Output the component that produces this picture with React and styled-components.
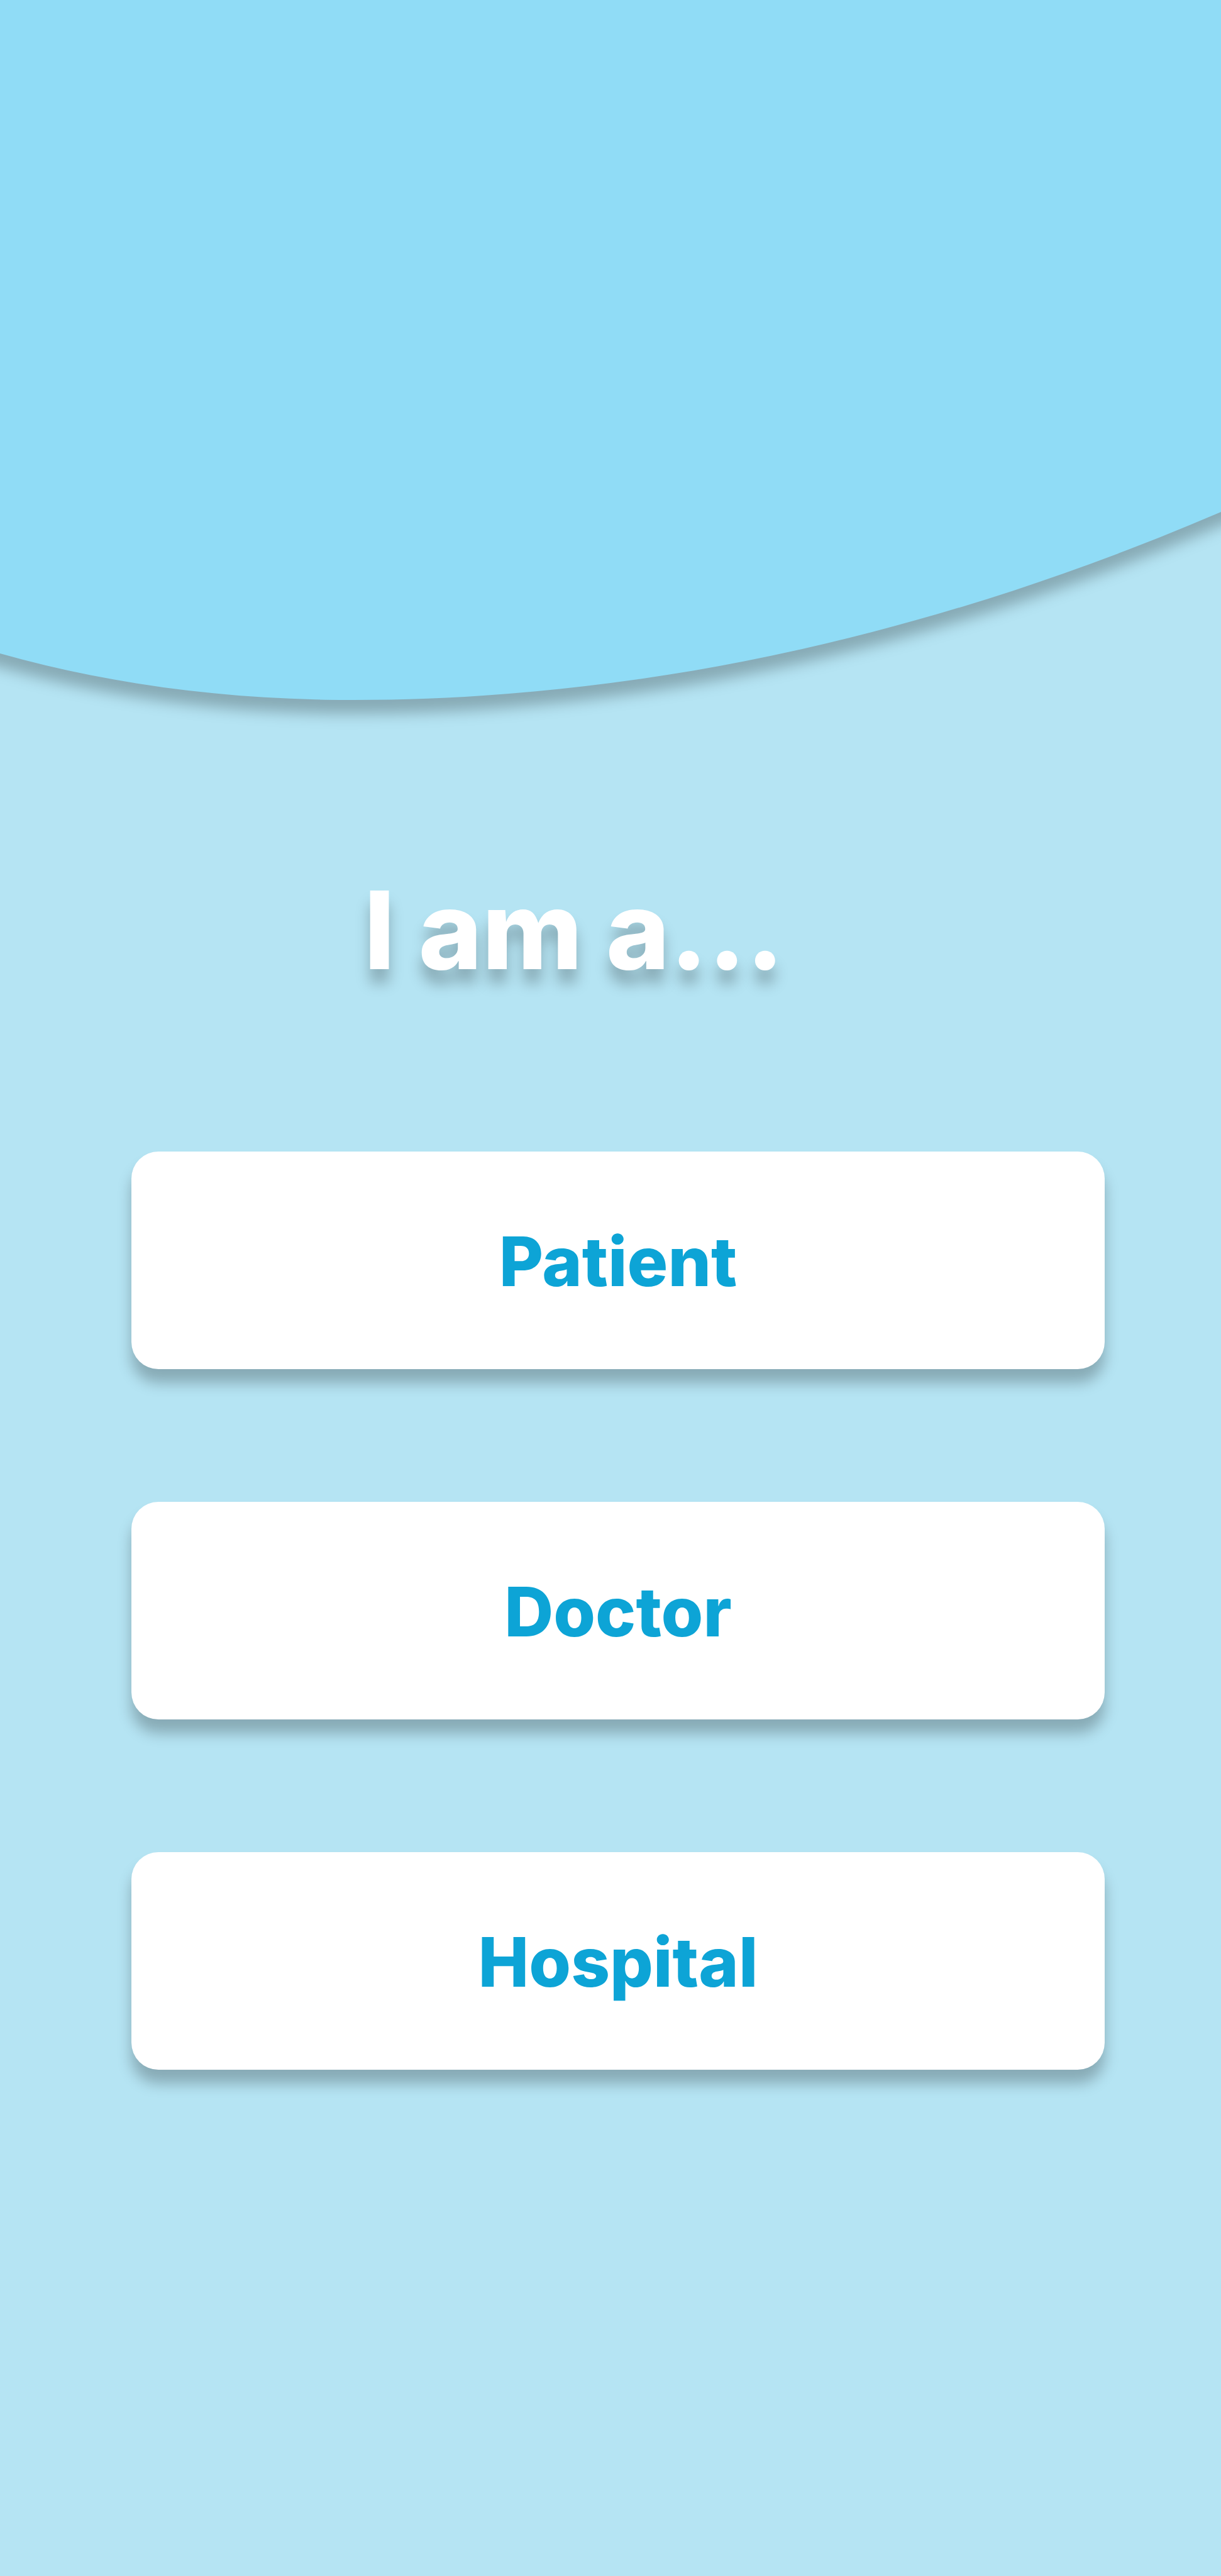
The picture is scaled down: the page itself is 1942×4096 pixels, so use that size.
import React from "react";
import styled, { createGlobalStyle } from "styled-components";

const GlobalStyle = createGlobalStyle`
  *, *::before, *::after { box-sizing: border-box; }
  body {
    margin: 0;
    background: #b5e4f3;
    font-family: Inter, "Liberation Sans", sans-serif;
  }
`;

const Page = styled.main`
  display: flex;
  flex-direction: column;
  min-height: 100vh;
  overflow: hidden;
  background: #b5e4f3;
`;

const Wave = styled.svg`
  display: block;
  width: 100%;
  flex: none;
  overflow: visible;
`;

const Content = styled.section`
  display: flex;
  flex-direction: column;
  gap: 249px;
  padding: 261px 185px 261px 209px;
`;

const Title = styled.h1`
  margin: 0;
  padding-left: 370px;
  color: #ffffff;
  font-size: 172px;
  font-weight: 800;
  line-height: 208px;
  text-shadow: 0 22px 22px rgba(0, 0, 0, 0.25);
`;

const RoleList = styled.div`
  display: flex;
  flex-direction: column;
  gap: 211px;
`;

const RoleButton = styled.button`
  display: flex;
  align-items: center;
  justify-content: center;
  width: 100%;
  height: 346px;
  padding: 2px 0 0;
  border: 0;
  border-radius: 43px;
  background: #ffffff;
  box-shadow: 0 22px 22px rgba(0, 0, 0, 0.25);
  color: #0da4d6;
  font-family: inherit;
  font-size: 108px;
  font-weight: 800;
  cursor: pointer;
`;

const roles = ["Patient", "Doctor", "Hospital"];

export default function App() {
  return (
    <>
      <GlobalStyle />
      <Page>
        <Wave viewBox="0 0 1942 1113" aria-hidden="true">
          <defs>
            <filter
              id="wave-shadow"
              filterUnits="userSpaceOnUse"
              x="-100"
              y="-100"
              width="2142"
              height="1320"
            >
              <feDropShadow
                dx="0"
                dy="22"
                stdDeviation="11"
                floodColor="#000000"
                floodOpacity="0.25"
                colorInterpolationFilters="sRGB"
              />
            </filter>
          </defs>
          <path
            d="M-60 -60V1022L0 1039C182 1090 367 1113 562 1113C1022 1113 1485 1010 1942 814L2002 789V-60Z"
            fill="#90dcf6"
            filter="url(#wave-shadow)"
          />
        </Wave>
        <Content>
          <Title>I am a...</Title>
          <RoleList>
            {roles.map((role) => (
              <RoleButton key={role} type="button">
                {role}
              </RoleButton>
            ))}
          </RoleList>
        </Content>
      </Page>
    </>
  );
}
